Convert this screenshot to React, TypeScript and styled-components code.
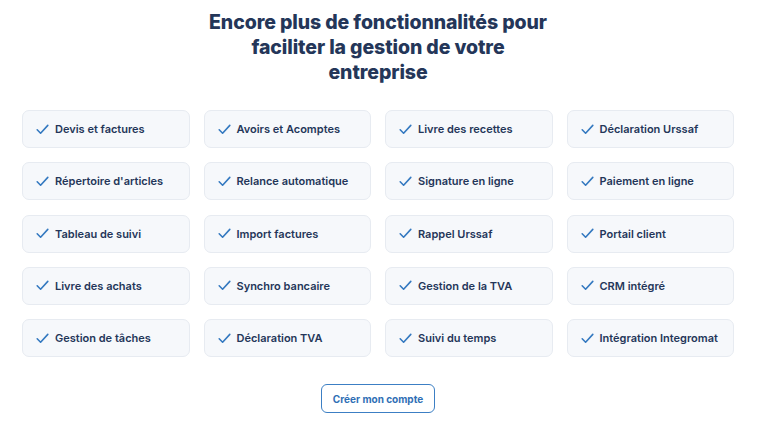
import React from 'react';
import styled, { createGlobalStyle } from 'styled-components';

const features = [
  'Devis et factures',
  'Avoirs et Acomptes',
  'Livre des recettes',
  'Déclaration Urssaf',
  "Répertoire d'articles",
  'Relance automatique',
  'Signature en ligne',
  'Paiement en ligne',
  'Tableau de suivi',
  'Import factures',
  'Rappel Urssaf',
  'Portail client',
  'Livre des achats',
  'Synchro bancaire',
  'Gestion de la TVA',
  'CRM intégré',
  'Gestion de tâches',
  'Déclaration TVA',
  'Suivi du temps',
  'Intégration Integromat',
];

const Check = () => (
  <svg width="13" height="11" viewBox="0 0 13 11" fill="none">
    <path
      d="M1.2 5.8 L4.6 9.2 L11.8 1.4"
      stroke="#3479c0"
      strokeWidth="1.6"
      strokeLinecap="round"
      strokeLinejoin="round"
    />
  </svg>
);

const App = () => {
  return (
    <Page>
      <GlobalStyle />
      <Title>
        Encore plus de fonctionnalités pour
        <br />
        faciliter la gestion de votre
        <br />
        entreprise
      </Title>
      <Grid>
        {features.map((f) => (
          <Card key={f}>
            <Check />
            <Label>{f}</Label>
          </Card>
        ))}
      </Grid>
      <CtaButton>Créer mon compte</CtaButton>
    </Page>
  );
};

export default App;

const GlobalStyle = createGlobalStyle`
  body {
    margin: 0;
    background: #ffffff;
    font-family: 'Inter', 'Liberation Sans', sans-serif;
  }
`;

const Page = styled.div`
  width: 756px;
  height: 435px;
  display: flex;
  flex-direction: column;
  align-items: center;
  padding-top: 10px;
  box-sizing: border-box;
`;

const Title = styled.h2`
  margin: 0;
  text-align: center;
  color: #243659;
  font-size: 19.5px;
  line-height: 25px;
  font-weight: 800;
  letter-spacing: -0.1px;
`;

const Grid = styled.div`
  margin-top: 25px;
  width: 712px;
  display: grid;
  grid-template-columns: repeat(4, 1fr);
  column-gap: 14px;
  row-gap: 14.3px;
`;

const Card = styled.div`
  height: 38px;
  box-sizing: border-box;
  display: flex;
  align-items: center;
  gap: 6px;
  padding-left: 13px;
  background: #f6f8fb;
  border: 1px solid #e7ebf1;
  border-radius: 7px;
`;

const Label = styled.span`
  color: #243659;
  font-size: 11px;
  font-weight: 600;
`;

const CtaButton = styled.button`
  margin-top: 27px;
  width: 114px;
  height: 29px;
  background: #ffffff;
  border: 1px solid #3c7fc4;
  border-radius: 6px;
  color: #2f6fb5;
  font-family: 'Inter', 'Liberation Sans', sans-serif;
  font-size: 10px;
  font-weight: 700;
  cursor: pointer;
`;
